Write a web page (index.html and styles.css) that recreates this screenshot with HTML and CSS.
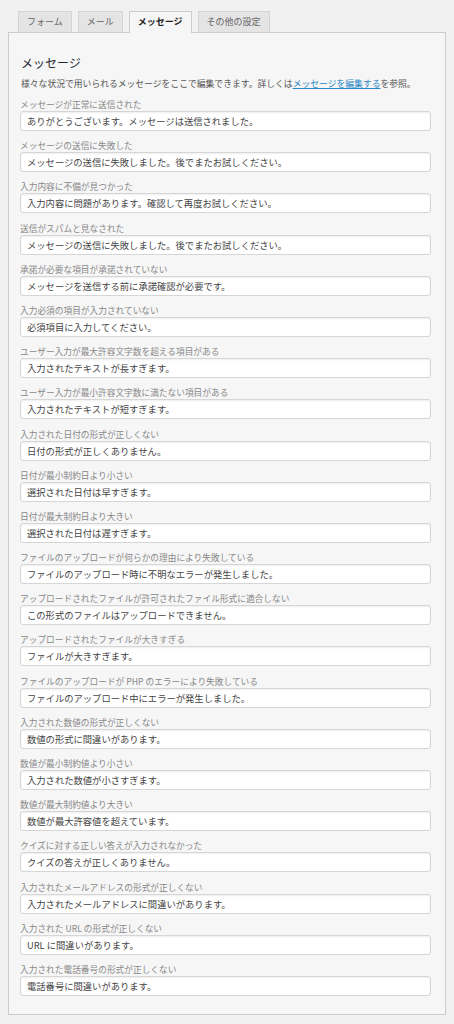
FILE: index.html
```html
<!DOCTYPE html>
<html lang="ja">
<head>
  <meta charset="UTF-8">
  <title>コンタクトフォーム編集 - メッセージ</title>
  <link rel="stylesheet" href="styles.css">
</head>
<body>
  <div class="wrap">
    <!-- Tabs -->
    <div class="tabs">
      <span class="tab">フォーム</span>
      <span class="tab">メール</span>
      <span class="tab active">メッセージ</span>
      <span class="tab">その他の設定</span>
    </div>

    <div class="panel">
      <h2>メッセージ</h2>
      <p class="desc">様々な状況で用いられるメッセージをここで編集できます。詳しくは<a href="#">メッセージを編集する</a>を参照。</p>

      <div id="fields"></div>
    </div>
  </div>

  <script>
    const messages = [
      ['メッセージが正常に送信された', 'ありがとうございます。メッセージは送信されました。'],
      ['メッセージの送信に失敗した', 'メッセージの送信に失敗しました。後でまたお試しください。'],
      ['入力内容に不備が見つかった', '入力内容に問題があります。確認して再度お試しください。'],
      ['送信がスパムと見なされた', 'メッセージの送信に失敗しました。後でまたお試しください。'],
      ['承諾が必要な項目が承諾されていない', 'メッセージを送信する前に承諾確認が必要です。'],
      ['入力必須の項目が入力されていない', '必須項目に入力してください。'],
      ['ユーザー入力が最大許容文字数を超える項目がある', '入力されたテキストが長すぎます。'],
      ['ユーザー入力が最小許容文字数に満たない項目がある', '入力されたテキストが短すぎます。'],
      ['入力された日付の形式が正しくない', '日付の形式が正しくありません。'],
      ['日付が最小制約日より小さい', '選択された日付は早すぎます。'],
      ['日付が最大制約日より大きい', '選択された日付は遅すぎます。'],
      ['ファイルのアップロードが何らかの理由により失敗している', 'ファイルのアップロード時に不明なエラーが発生しました。'],
      ['アップロードされたファイルが許可されたファイル形式に適合しない', 'この形式のファイルはアップロードできません。'],
      ['アップロードされたファイルが大きすぎる', 'ファイルが大きすぎます。'],
      ['ファイルのアップロードが PHP のエラーにより失敗している', 'ファイルのアップロード中にエラーが発生しました。'],
      ['入力された数値の形式が正しくない', '数値の形式に間違いがあります。'],
      ['数値が最小制約値より小さい', '入力された数値が小さすぎます。'],
      ['数値が最大制約値より大きい', '数値が最大許容値を超えています。'],
      ['クイズに対する正しい答えが入力されなかった', 'クイズの答えが正しくありません。'],
      ['入力されたメールアドレスの形式が正しくない', '入力されたメールアドレスに間違いがあります。'],
      ['入力された URL の形式が正しくない', 'URL に間違いがあります。'],
      ['入力された電話番号の形式が正しくない', '電話番号に間違いがあります。']
    ];

    const fields = document.getElementById('fields');
    messages.forEach(([label, value]) => {
      const div = document.createElement('div');
      div.classList.add('field');
      div.innerHTML = `
  <label>${label}</label>
  <input type="text" value="${value}">
`;
      fields.appendChild(div);
    });
  </script>
</body>
</html>
```

FILE: styles.css
```css
body {
  font-family: "Noto Sans CJK JP", "Noto Sans", sans-serif;
  background: #f1f1f1;
  margin: 0;
  padding: 11px 0 0 8px;
  color: #444;
}

.wrap {
  width: 438px;
}

/* Tabs */
.tabs {
  display: flex;
  gap: 6px;
  padding-left: 10px;
  margin-bottom: -1px;
}

.tab {
  height: 20px;
  line-height: 20px;
  padding: 0 8px;
  font-size: 9px;
  color: #666;
  background: #e4e4e4;
  border: 1px solid #d4d4d4;
  border-bottom: none;
}

.tab.active {
  background: #f6f6f6;
  color: #222;
  font-weight: bold;
  border-color: #ccc;
  height: 21px;
}

/* Panel */
.panel {
  background: #f6f6f6;
  border: 1px solid #ccc;
  padding: 22px 14px 18px 11px;
}

h2 {
  font-size: 12px;
  font-weight: normal;
  color: #23282d;
  line-height: 16px;
  margin: 0 0 7px 1px;
}

.desc {
  font-size: 8.8px;
  line-height: 12px;
  margin: 0 0 9px 1px;
  color: #555;
}

.desc a {
  color: #2a86c8;
}

.field {
  margin-bottom: 9.2px;
}

.field:last-child {
  margin-bottom: 0;
}

label {
  display: block;
  font-size: 8.7px;
  line-height: 12px;
  color: #888;
}

input {
  display: block;
  box-sizing: border-box;
  width: 411px;
  height: 20px;
  margin: 0;
  padding: 0 6px;
  font-family: inherit;
  font-size: 9.3px;
  color: #444;
  background: #fff;
  border: 1px solid #d6d6d6;
  border-radius: 3px;
  box-shadow: inset 0 1px 2px rgba(0, 0, 0, 0.07);
}
```
